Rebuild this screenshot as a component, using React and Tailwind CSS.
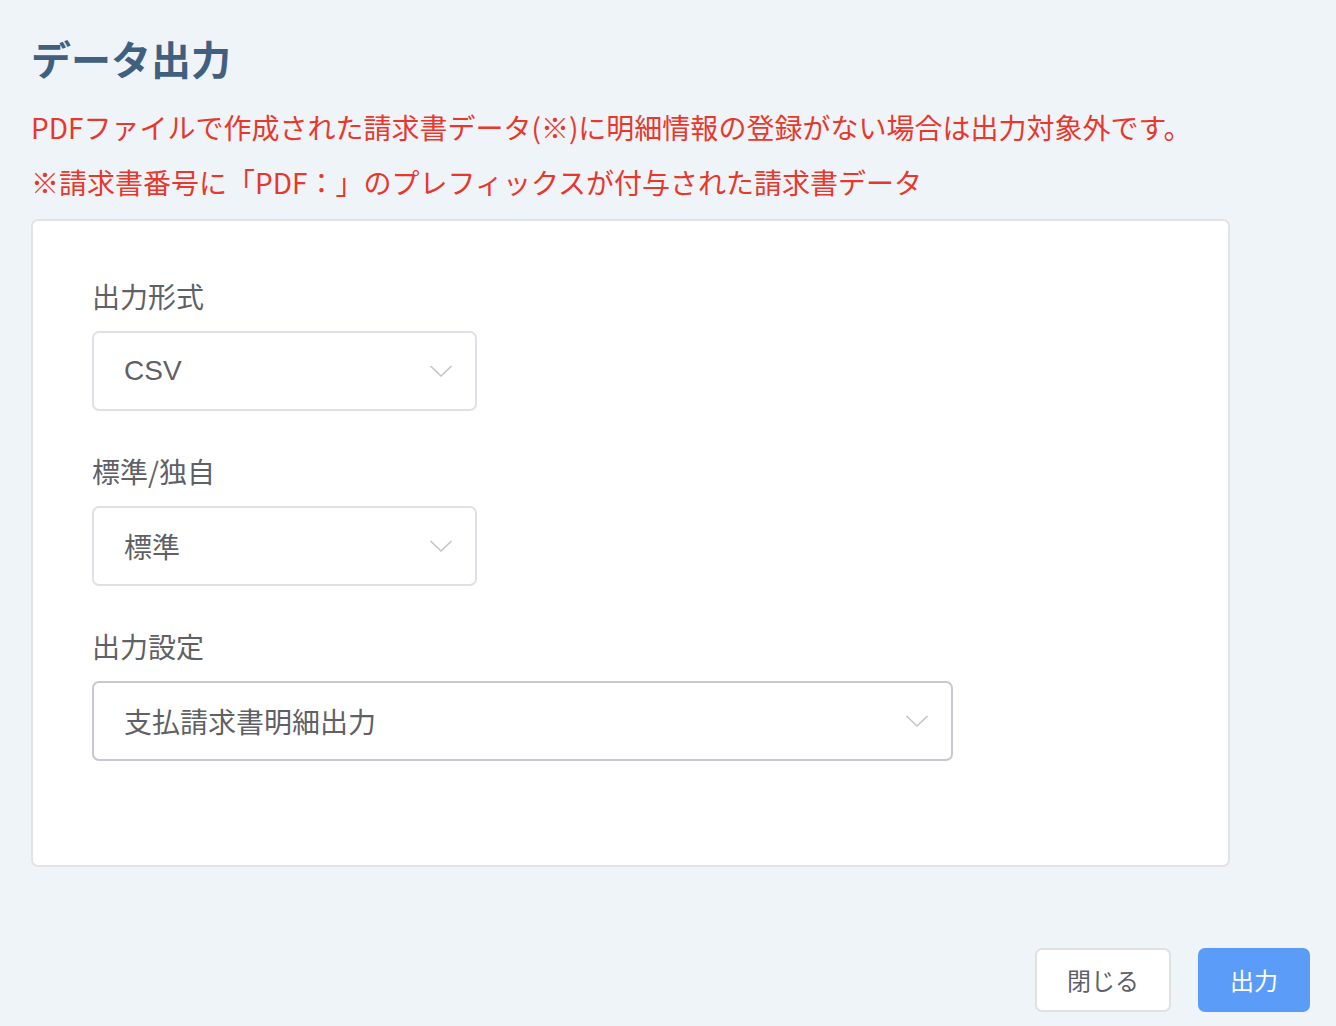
import React from "react";

const Chevron = () => (
  <svg width="24" height="14" viewBox="0 0 24 14" fill="none" className="shrink-0">
    <path d="M1.5 2 L12 12 L22.5 2" stroke="#c0c4cc" strokeWidth="1.6" />
  </svg>
);

const Select = ({ value, wide, dark, latin }) => (
  <div
    className={`flex items-center justify-between h-[80px] rounded-[7px] border-2 bg-white pl-[30px] pr-[22px] ${
      wide ? "w-[861px]" : "w-[385px]"
    } ${dark ? "border-[#c6c9cf]" : "border-[#dfe1e6]"}`}
  >
    <span
      className="text-[28px] leading-[40px] text-[#5f6166]"
      style={{
        fontFamily: latin
          ? '"Liberation Sans", "Noto Sans CJK JP", sans-serif'
          : '"Noto Sans CJK JP", sans-serif',
      }}
    >
      {value}
    </span>
    <Chevron />
  </div>
);

const Field = ({ label, children, first }) => (
  <div className={first ? "" : "mt-[40px]"}>
    <div className="text-[28px] leading-[40px] text-[#5f6166] mb-[15px]">{label}</div>
    {children}
  </div>
);

export default function App() {
  return (
    <div
      className="min-h-[1026px] w-full bg-[#eff4f8] pl-[31px] pr-[26px] pt-[30px]"
      style={{ fontFamily: '"Noto Sans CJK JP", sans-serif' }}
    >
      <h1 className="text-[40px] leading-[56px] font-bold text-[#41607f]">データ出力</h1>
      <p className="mt-[14px] text-[28px] leading-[55px] text-[#e8382d] whitespace-nowrap">
        PDFファイルで作成された請求書データ(※)に明細情報の登録がない場合は出力対象外です。
      </p>
      <p className="text-[28px] leading-[55px] text-[#e8382d] whitespace-nowrap">
        ※請求書番号に「PDF：」のプレフィックスが付与された請求書データ
      </p>
      <div className="mt-[9px] w-[1199px] h-[648px] bg-white border-2 border-[#e2e3e5] rounded-[7px] pt-[55px] pl-[59px]">
        <Field label="出力形式" first>
          <Select value="CSV" latin />
        </Field>
        <Field label="標準/独自">
          <Select value="標準" />
        </Field>
        <Field label="出力設定">
          <Select value="支払請求書明細出力" wide dark />
        </Field>
      </div>
      <div className="mt-[81px] flex justify-end gap-[27px]">
        <button className="w-[136px] h-[64px] bg-white border-2 border-[#dfe1e6] rounded-[7px] text-[24px] text-[#5f6166]">
          閉じる
        </button>
        <button className="w-[112px] h-[64px] bg-[#5b9cf8] rounded-[7px] text-[24px] text-white">
          出力
        </button>
      </div>
    </div>
  );
}
